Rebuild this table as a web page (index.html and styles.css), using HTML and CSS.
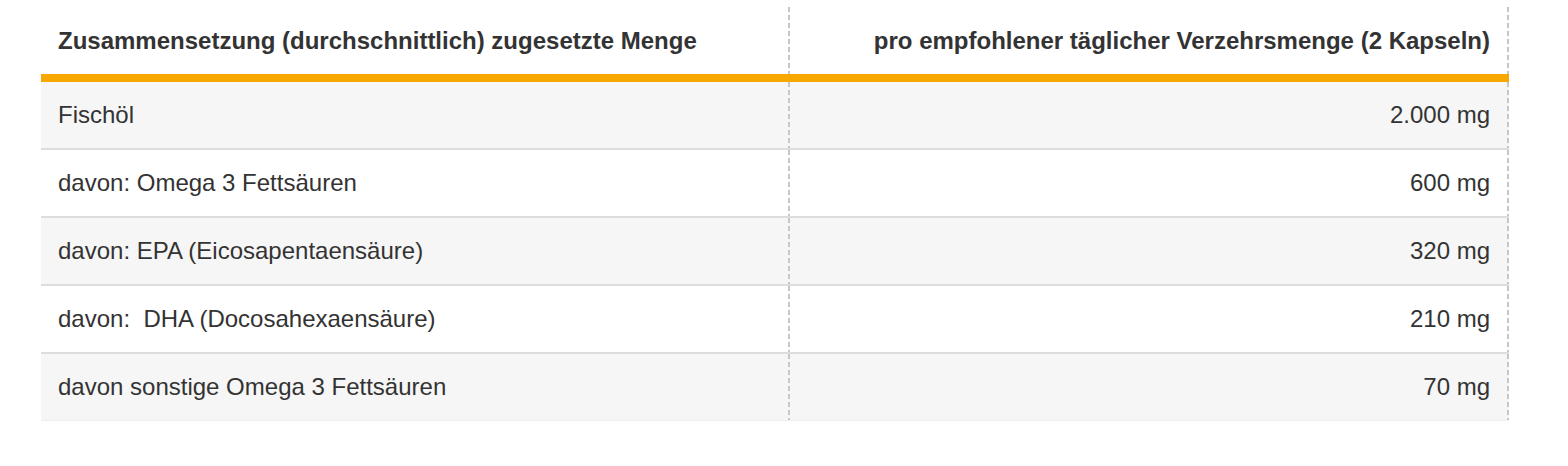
FILE: index.html
```html
<!DOCTYPE html>
<html lang="de">
<head>
<meta charset="utf-8">
<title>Zusammensetzung</title>
<link rel="stylesheet" href="styles.css">
</head>
<body>
<div class="page">
  <table class="nutri">
    <thead>
      <tr>
        <th class="col-name">Zusammensetzung (durchschnittlich) zugesetzte Menge</th>
        <th class="col-amount">pro empfohlener täglicher Verzehrsmenge (2 Kapseln)</th>
      </tr>
    </thead>
    <tbody>
      <tr class="odd">
        <td class="col-name">Fischöl</td>
        <td class="col-amount">2.000 mg</td>
      </tr>
      <tr>
        <td class="col-name">davon: Omega 3 Fettsäuren</td>
        <td class="col-amount">600 mg</td>
      </tr>
      <tr class="odd">
        <td class="col-name">davon: EPA (Eicosapentaensäure)</td>
        <td class="col-amount">320 mg</td>
      </tr>
      <tr>
        <td class="col-name">davon:&nbsp; DHA (Docosahexaensäure)</td>
        <td class="col-amount">210 mg</td>
      </tr>
      <tr class="odd last">
        <td class="col-name">davon sonstige Omega 3 Fettsäuren</td>
        <td class="col-amount">70 mg</td>
      </tr>
    </tbody>
  </table>
</div>
</body>
</html>
```
FILE: styles.css
```css
html, body {
  margin: 0;
  padding: 0;
  background: #ffffff;
}

.page {
  padding: 7px 0 0 41px;
}

.nutri {
  width: 1468px;
  border-collapse: separate;
  border-spacing: 0;
  font-family: "Liberation Sans", Arial, Helvetica, sans-serif;
  font-size: 24px;
  color: #333333;
  table-layout: fixed;
}

.nutri th,
.nutri td {
  padding: 0 17px;
  background-image: linear-gradient(to bottom, #c6c6c6 5px, transparent 5px);
  background-size: 2px 8px;
  background-repeat: repeat-y;
  background-position: right top;
}

.nutri th {
  height: 67px;
  font-weight: 700;
  line-height: 29px;
  border-bottom: 8px solid #f8a600;
  box-sizing: content-box;
  padding-top: 0;
  padding-bottom: 0;
}

.nutri td {
  height: 66px;
  line-height: 30px;
  border-bottom: 2px solid #dddddd;
}

.nutri .col-name {
  width: 715px;
  text-align: left;
}

.nutri .col-amount {
  text-align: right;
  padding-right: 19px;
}

.nutri tr.odd td {
  background-color: #f6f6f6;
}

.nutri tr.last td {
  border-bottom: 1px solid #eeeeee;
}
```
